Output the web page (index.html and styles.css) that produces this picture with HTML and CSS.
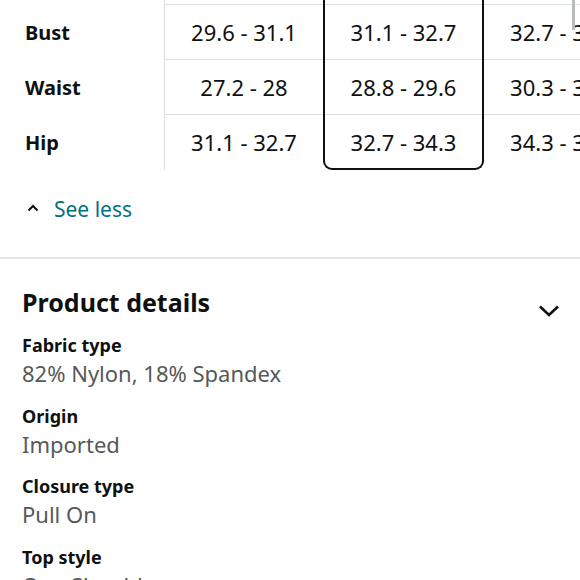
FILE: index.html
```html
<!DOCTYPE html>
<html lang="en">
<head>
<meta charset="utf-8">
<title>Size chart and product details</title>
<link rel="stylesheet" href="styles.css">
</head>
<body>
<div class="page">
  <div class="chart">
    <div class="chart-inner">
      <div class="col col-labels">
        <div class="cell head"></div>
        <div class="cell label">Bust</div>
        <div class="cell label">Waist</div>
        <div class="cell label">Hip</div>
      </div>
      <div class="col col-size">
        <div class="cell head"></div>
        <div class="cell">29.6 - 31.1</div>
        <div class="cell">27.2 - 28</div>
        <div class="cell last">31.1 - 32.7</div>
      </div>
      <div class="col col-size selected">
        <div class="cell head"></div>
        <div class="cell">31.1 - 32.7</div>
        <div class="cell">28.8 - 29.6</div>
        <div class="cell last">32.7 - 34.3</div>
      </div>
      <div class="col col-size">
        <div class="cell head"></div>
        <div class="cell">32.7 - 34.3</div>
        <div class="cell">30.3 - 31.9</div>
        <div class="cell last">34.3 - 35.8</div>
      </div>
    </div>
    <div class="scrollbar"></div>
  </div>

  <div class="see-less">
    <svg class="caret" width="12" height="8" viewBox="0 0 12 8"><path d="M1.5 6.5 L6 2 L10.5 6.5" fill="none" stroke="#0f1111" stroke-width="2"/></svg>
    <span class="link">See less</span>
  </div>

  <div class="divider"></div>

  <section class="details">
    <div class="details-head">
      <h2>Product details</h2>
      <svg class="chevron" width="22" height="14" viewBox="0 0 22 14"><path d="M2 2.5 L11 11 L20 2.5" fill="none" stroke="#0f1111" stroke-width="2.6"/></svg>
    </div>
    <dl class="attrs">
      <div class="attr"><dt>Fabric type</dt><dd>82% Nylon, 18% Spandex</dd></div>
      <div class="attr"><dt>Origin</dt><dd>Imported</dd></div>
      <div class="attr"><dt>Closure type</dt><dd>Pull On</dd></div>
      <div class="attr"><dt>Top style</dt><dd>One Shoulder</dd></div>
    </dl>
  </section>
</div>
</body>
</html>
```
FILE: styles.css
```css
html, body {
  margin: 0;
  padding: 0;
  background: #fff;
}
body {
  font-family: "Noto Sans", "Open Sans", Arial, sans-serif;
  color: #0f1111;
  width: 580px;
  height: 580px;
  overflow: hidden;
}
.page {
  width: 580px;
}
.chart {
  position: relative;
  height: 171px;
  overflow: hidden;
}
.chart-inner {
  display: flex;
  margin-top: -50px;
}
.col {
  flex: none;
  display: flex;
  flex-direction: column;
}
.col-labels {
  width: 164px;
  border-right: 1px solid #dcdfdf;
}
.col-size {
  width: 158px;
}
.col-size.selected {
  width: 157px;
  border: 2px solid #0f1111;
  border-top: none;
  border-radius: 0 0 9px 9px;
}
.cell {
  box-sizing: border-box;
  height: 55px;
  display: flex;
  align-items: center;
  justify-content: center;
  font-size: 22px;
  border-bottom: 1px solid #dcdfdf;
  white-space: nowrap;
}
.cell.last {
  border-bottom: none;
  height: 53px;
}
.col-labels .cell {
  border-bottom: none;
  justify-content: flex-start;
  padding-left: 25px;
}
.cell.label {
  font-weight: 700;
  font-size: 20px;
}
.scrollbar {
  position: absolute;
  top: 0;
  right: 5px;
  width: 3px;
  height: 30px;
  background: #b9bcbc;
}
.see-less {
  display: flex;
  align-items: center;
  gap: 15px;
  padding: 0 0 0 27px;
  height: 76px;
  box-sizing: border-box;
}
.caret {
  margin-top: -2px;
}
.link {
  color: #007185;
  font-size: 21px;
}
.divider {
  height: 2px;
  background: #e3e6e6;
  margin-top: 10px;
}
.details {
  padding: 0 20px 0 22px;
}
.details-head {
  display: flex;
  align-items: center;
  justify-content: space-between;
  margin-top: 26px;
}
.details-head h2 {
  margin: 0;
  font-size: 25px;
  font-weight: 700;
  line-height: 34px;
}
.chevron {
  margin-top: 18px;
}
.attrs {
  margin: 13px 0 0;
}
.attr {
  margin-bottom: 13px;
}
.attrs dt {
  font-weight: 700;
  font-size: 18px;
  line-height: 26px;
}
.attrs dd {
  margin: 0;
  font-size: 22px;
  line-height: 31.5px;
  color: #565959;
}
```
